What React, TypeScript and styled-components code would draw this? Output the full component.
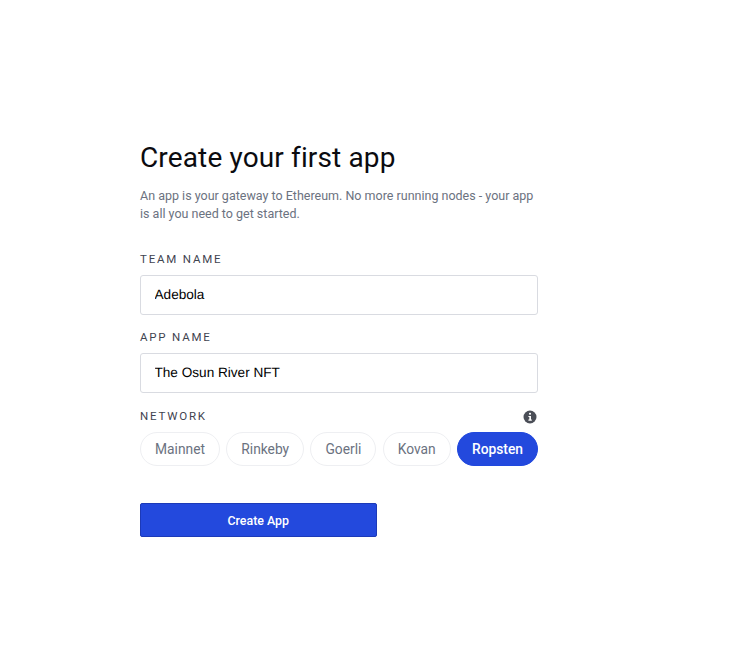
import styled, { createGlobalStyle } from 'styled-components';

const GlobalStyle = createGlobalStyle`
  html, body {
    margin: 0;
    padding: 0;
    background: #fff;
  }
`;

const Page = styled.main`
  width: 398px;
  padding: 141px 0 0 140px;
  font-family: Roboto, 'Liberation Sans', sans-serif;
`;

const Title = styled.h1`
  margin: 0;
  font-size: 28px;
  line-height: 34px;
  font-weight: 400;
  letter-spacing: 0.14px;
  color: #0b0b0f;
`;

const Intro = styled.p`
  margin: 12px 0 0;
  font-size: 12.5px;
  line-height: 18px;
  color: #6b7280;
`;

const Label = styled.label`
  display: block;
  font-size: 11.5px;
  line-height: 14px;
  letter-spacing: 1.8px;
  text-transform: uppercase;
  color: #3f4450;
`;

const Field = styled.div`
  margin-top: 29px;

  & + & {
    margin-top: 15px;
  }
`;

const TextInput = styled.input`
  display: block;
  box-sizing: border-box;
  width: 100%;
  height: 40px;
  margin-top: 9px;
  padding: 0 13.5px 1px;
  border: 1px solid #d9dbe1;
  border-radius: 3px;
  background: #fff;
  font-family: 'Liberation Sans', Arial, sans-serif;
  font-size: 13.6px;
  text-rendering: geometricPrecision;
  color: #000;
  outline: none;
`;

const NetworkHead = styled.div`
  display: flex;
  align-items: center;
  justify-content: space-between;
  margin-top: 15px;
`;

const InfoIcon = styled.svg`
  width: 14px;
  height: 14px;
  margin: 2px 1px 0 0;
  color: #4b4e57;
`;

const Pills = styled.div`
  display: flex;
  justify-content: space-between;
  margin-top: 8px;
`;

const Pill = styled.button<{ $active?: boolean }>`
  height: 34px;
  padding: 0 14px;
  border: 1px solid ${(p) => (p.$active ? '#2048de' : '#eeeff2')};
  border-radius: 17px;
  background: ${(p) => (p.$active ? '#2349dd' : '#fff')};
  font-family: Roboto, 'Liberation Sans', sans-serif;
  font-size: 13.8px;
  font-weight: ${(p) => (p.$active ? 500 : 400)};
  color: ${(p) => (p.$active ? '#fff' : '#6b7280')};
`;

const SubmitButton = styled.button`
  display: block;
  width: 236.5px;
  height: 34px;
  margin-top: 37px;
  border: 1px solid #1c3ab8;
  border-radius: 2px;
  background: #2349dd;
  font-family: Roboto, 'Liberation Sans', sans-serif;
  font-size: 12.4px;
  font-weight: 500;
  color: #fff;
`;

const networks = ['Mainnet', 'Rinkeby', 'Goerli', 'Kovan', 'Ropsten'];

const App = () => {
  return (
    <>
      <GlobalStyle />
      <Page>
        <Title>Create your first app</Title>
        <Intro>
          An app is your gateway to Ethereum. No more running nodes - your app
          is all you need to get started.
        </Intro>

        <Field>
          <Label>Team name</Label>
          <TextInput readOnly value='Adebola' />
        </Field>
        <Field>
          <Label>App name</Label>
          <TextInput readOnly value='The Osun River NFT' />
        </Field>

        <NetworkHead>
          <Label>Network</Label>
          <InfoIcon viewBox='0 0 14 14'>
            <circle cx='7' cy='7' r='6.5' fill='currentColor' />
            <rect x='6' y='2.8' width='2' height='2' rx='0.8' fill='#fff' />
            <path d='M5.4 6h2.6v3.6h0.8v1.1H5.4V9.6h0.9V7.1h-0.9z' fill='#fff' />
          </InfoIcon>
        </NetworkHead>
        <Pills>
          {networks.map((name) => (
            <Pill key={name} $active={name === 'Ropsten'}>
              {name}
            </Pill>
          ))}
        </Pills>

        <SubmitButton>Create App</SubmitButton>
      </Page>
    </>
  );
};

export default App;
